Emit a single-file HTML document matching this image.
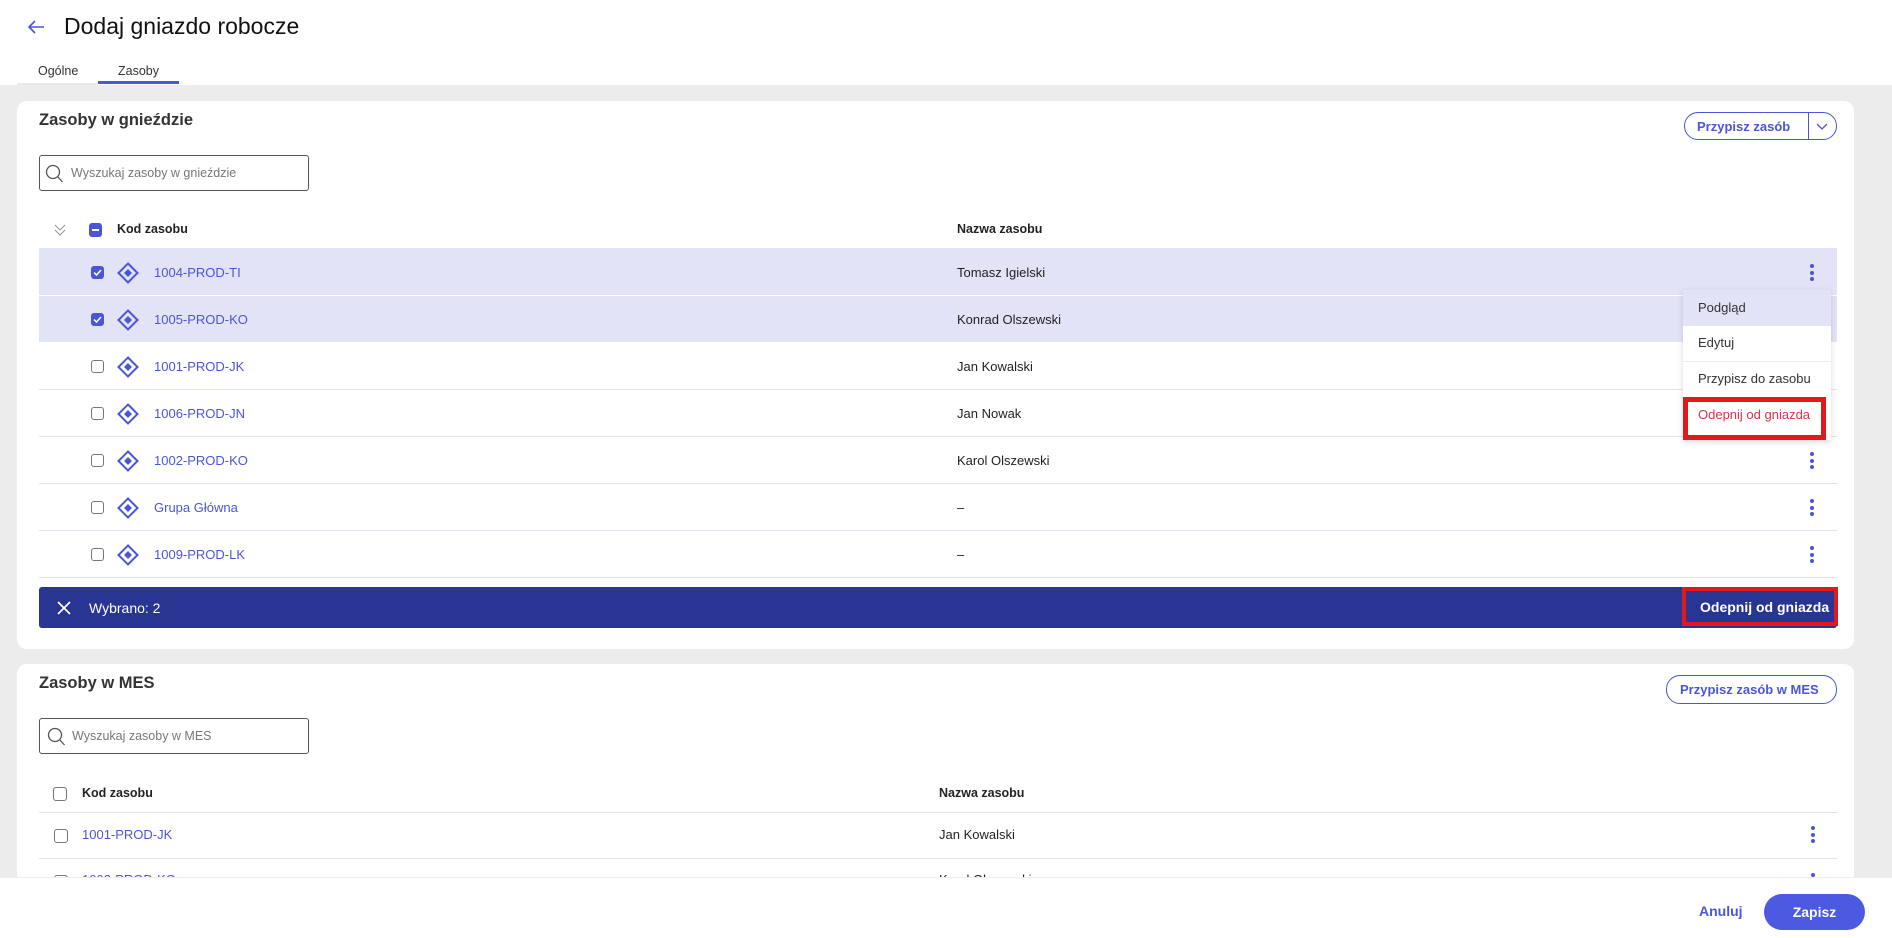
<!DOCTYPE html>
<html style="width:1892px;height:938px;overflow:hidden"><head><meta charset="utf-8">
<style>
*{box-sizing:border-box;margin:0;padding:0}
body{width:1892px;height:938px;overflow:hidden;background:#ececec;font-family:"Liberation Sans",sans-serif;position:relative;color:#222}
.a{position:absolute}
.top{left:0;top:0;width:1892px;height:85px;background:#fff}
.card{background:#fff;border-radius:10px}
.blue{color:#4b55d9}
.row{position:absolute;left:39px;width:1798px;height:47px;border-bottom:1px solid #e2e2f6;font-size:13px}
.row.sel{background:#e2e3f7;border-bottom:1px solid #fff}
.row span{position:absolute;top:16px}
.cb{position:absolute;width:13px;height:13px;border:1.3px solid #777;border-radius:3px;background:#fff}
.cb.on{background:#4b55d9;border-color:#4b55d9}
.dots{position:absolute;width:4px}
.dots i{display:block;width:4px;height:4px;border-radius:2px;background:#4b55d9;margin-bottom:2.5px}
.search{position:absolute;border:1.3px solid #555;border-radius:3px;height:36px;font-size:12.5px;color:#777}
.search span{position:absolute;left:24px;top:10px}
.pill{position:absolute;border:1.3px solid #4b55d9;border-radius:14px;color:#4b55d9;font-weight:bold;font-size:13px;text-align:center}
.hd{font-size:12.5px;font-weight:bold;color:#222}
</style></head><body>
<div class="a top"></div>
<svg class="a" style="left:26px;top:19px" width="20" height="16" viewBox="0 0 20 16"><path d="M18 8H3M9 2L3 8l6 6" fill="none" stroke="#4b55d9" stroke-width="1.6"/></svg>
<div class="a" style="left:64px;top:13px;font-size:23px;color:#111">Dodaj gniazdo robocze</div>
<div class="a" style="left:38px;top:64px;font-size:12.5px;color:#333">Ogólne</div>
<div class="a" style="left:118px;top:64px;font-size:12.5px;color:#333">Zasoby</div>
<div class="a" style="left:17px;top:83px;width:81px;height:2px;background:#e8e8e8"></div>
<div class="a" style="left:98px;top:81px;width:81px;height:3px;background:#4b55d9"></div>

<div class="a card" style="left:17px;top:101px;width:1837px;height:548px"></div>
<div class="a" style="left:39px;top:111px;font-size:16.5px;font-weight:bold;color:#333">Zasoby w gnieździe</div>
<div class="pill" style="left:1684px;top:112px;width:153px;height:28px"><span style="position:absolute;left:12px;top:6px">Przypisz zasób</span><span style="position:absolute;left:123px;top:0;width:1px;height:26px;background:#4b55d9"></span><svg style="position:absolute;left:131px;top:10px" width="12" height="8"><path d="M1 1l5 5 5-5" fill="none" stroke="#4b55d9" stroke-width="1.3"/></svg></div>
<div class="search" style="left:39px;top:155px;width:270px"><svg style="position:absolute;left:5px;top:8px" width="18" height="19"><circle cx="8" cy="8" r="6.5" fill="none" stroke="#555" stroke-width="1.3"/><path d="M12.5 12.5l5 5.5" stroke="#555" stroke-width="1.3"/></svg><span style="left:31px">Wyszukaj zasoby w gnieździe</span></div>

<svg class="a" style="left:54px;top:224px" width="12" height="12"><path d="M1 1l5 5 5-5M1 6l5 5 5-5" fill="none" stroke="#999" stroke-width="1.1"/></svg>
<div class="cb on" style="left:89px;top:223px;width:13px;height:14px"><div style="position:absolute;left:2px;top:5px;width:7px;height:2px;background:#fff"></div></div>
<div class="a hd" style="left:117px;top:222px">Kod zasobu</div>
<div class="a hd" style="left:957px;top:222px">Nazwa zasobu</div>
<div class="a" style="left:39px;top:248px;width:1798px;height:1px;background:#e2e2f6"></div>

<div class="row sel" style="top:249px"><div class="cb on" style="left:52px;top:17px"><svg width="11" height="11" style="position:absolute;left:0;top:0"><path d="M2 5.5l2.5 2.5 4.5-5" fill="none" stroke="#fff" stroke-width="1.5"/></svg></div><svg style="position:absolute;left:78px;top:13px" width="22" height="22"><path d="M11 1.5l9.5 9.5-9.5 9.5-9.5-9.5z" fill="none" stroke="#4b55d9" stroke-width="2"/><path d="M11 7l4 4-4 4-4-4z" fill="#4b55d9"/></svg><span class="blue" style="left:115px">1004-PROD-TI</span><span style="left:918px">Tomasz Igielski</span><div class="dots" style="left:1771px;top:15px"><i></i><i></i><i></i></div></div>
<div class="row sel" style="top:296px"><div class="cb on" style="left:52px;top:17px"><svg width="11" height="11" style="position:absolute;left:0;top:0"><path d="M2 5.5l2.5 2.5 4.5-5" fill="none" stroke="#fff" stroke-width="1.5"/></svg></div><svg style="position:absolute;left:78px;top:13px" width="22" height="22"><path d="M11 1.5l9.5 9.5-9.5 9.5-9.5-9.5z" fill="none" stroke="#4b55d9" stroke-width="2"/><path d="M11 7l4 4-4 4-4-4z" fill="#4b55d9"/></svg><span class="blue" style="left:115px">1005-PROD-KO</span><span style="left:918px">Konrad Olszewski</span></div>
<div class="row" style="top:343px"><div class="cb" style="left:52px;top:17px"></div><svg style="position:absolute;left:78px;top:13px" width="22" height="22"><path d="M11 1.5l9.5 9.5-9.5 9.5-9.5-9.5z" fill="none" stroke="#4b55d9" stroke-width="2"/><path d="M11 7l4 4-4 4-4-4z" fill="#4b55d9"/></svg><span class="blue" style="left:115px">1001-PROD-JK</span><span style="left:918px">Jan Kowalski</span></div>
<div class="row" style="top:390px"><div class="cb" style="left:52px;top:17px"></div><svg style="position:absolute;left:78px;top:13px" width="22" height="22"><path d="M11 1.5l9.5 9.5-9.5 9.5-9.5-9.5z" fill="none" stroke="#4b55d9" stroke-width="2"/><path d="M11 7l4 4-4 4-4-4z" fill="#4b55d9"/></svg><span class="blue" style="left:115px">1006-PROD-JN</span><span style="left:918px">Jan Nowak</span></div>
<div class="row" style="top:437px"><div class="cb" style="left:52px;top:17px"></div><svg style="position:absolute;left:78px;top:13px" width="22" height="22"><path d="M11 1.5l9.5 9.5-9.5 9.5-9.5-9.5z" fill="none" stroke="#4b55d9" stroke-width="2"/><path d="M11 7l4 4-4 4-4-4z" fill="#4b55d9"/></svg><span class="blue" style="left:115px">1002-PROD-KO</span><span style="left:918px">Karol Olszewski</span><div class="dots" style="left:1771px;top:15px"><i></i><i></i><i></i></div></div>
<div class="row" style="top:484px"><div class="cb" style="left:52px;top:17px"></div><svg style="position:absolute;left:78px;top:13px" width="22" height="22"><path d="M11 1.5l9.5 9.5-9.5 9.5-9.5-9.5z" fill="none" stroke="#4b55d9" stroke-width="2"/><path d="M11 7l4 4-4 4-4-4z" fill="#4b55d9"/></svg><span class="blue" style="left:115px">Grupa Główna</span><span style="left:918px">–</span><div class="dots" style="left:1771px;top:15px"><i></i><i></i><i></i></div></div>
<div class="row" style="top:531px"><div class="cb" style="left:52px;top:17px"></div><svg style="position:absolute;left:78px;top:13px" width="22" height="22"><path d="M11 1.5l9.5 9.5-9.5 9.5-9.5-9.5z" fill="none" stroke="#4b55d9" stroke-width="2"/><path d="M11 7l4 4-4 4-4-4z" fill="#4b55d9"/></svg><span class="blue" style="left:115px">1009-PROD-LK</span><span style="left:918px">–</span><div class="dots" style="left:1771px;top:15px"><i></i><i></i><i></i></div></div>

<div class="a" style="left:39px;top:587px;width:1798px;height:41px;background:#283593;border-radius:3px"></div>
<svg class="a" style="left:57px;top:601px" width="14" height="14"><path d="M1 1l12 12M13 1L1 13" stroke="#fff" stroke-width="1.7"/></svg>
<div class="a" style="left:89px;top:600px;font-size:14px;color:#fff">Wybrano: 2</div>
<div class="a" style="left:1682px;top:587px;width:156px;height:39px;border:4px solid #e0191e;background:#283593"></div>
<div class="a" style="left:1700px;top:599px;font-size:14px;font-weight:bold;color:#fff">Odepnij od gniazda</div>

<div class="a" style="left:1683px;top:290px;width:148px;height:150px;background:#fff;box-shadow:0 2px 6px rgba(0,0,0,.15)"></div>
<div class="a" style="left:1683px;top:290px;width:148px;height:36px;background:#e2e3f7"></div>
<div class="a" style="left:1683px;top:361px;width:148px;height:1px;background:#eee"></div>
<div class="a" style="left:1698px;top:300px;font-size:13px;color:#333">Podgląd</div>
<div class="a" style="left:1698px;top:335px;font-size:13px;color:#333">Edytuj</div>
<div class="a" style="left:1698px;top:371px;font-size:13px;color:#333">Przypisz do zasobu</div>
<div class="a" style="left:1683px;top:397px;width:143px;height:43px;border:5px solid #e0191e"></div>
<div class="a" style="left:1698px;top:407px;font-size:13px;color:#e03050">Odepnij od gniazda</div>

<div class="a card" style="left:17px;top:664px;width:1837px;height:274px;border-radius:10px 10px 0 0"></div>
<div class="a" style="left:39px;top:674px;font-size:16.5px;font-weight:bold;color:#333">Zasoby w MES</div>
<div class="pill" style="left:1666px;top:675px;width:171px;height:29px"><span style="position:absolute;left:13px;top:6px">Przypisz zasób w MES</span></div>
<div class="search" style="left:39px;top:718px;width:270px"><svg style="position:absolute;left:7px;top:8px" width="18" height="19"><circle cx="8" cy="8" r="6.5" fill="none" stroke="#555" stroke-width="1.3"/><path d="M12.5 12.5l5 5.5" stroke="#555" stroke-width="1.3"/></svg><span style="left:32px">Wyszukaj zasoby w MES</span></div>
<div class="cb" style="left:53px;top:787px;width:14px;height:14px"></div>
<div class="a hd" style="left:82px;top:786px">Kod zasobu</div>
<div class="a hd" style="left:939px;top:786px">Nazwa zasobu</div>
<div class="a" style="left:39px;top:812px;width:1798px;height:1px;background:#e2e2f6"></div>
<div class="cb" style="left:54px;top:829px;width:14px;height:14px"></div>
<div class="a blue" style="left:82px;top:827px;font-size:13px">1001-PROD-JK</div>
<div class="a" style="left:939px;top:827px;font-size:13px">Jan Kowalski</div>
<div class="dots a" style="left:1811px;top:826px"><i></i><i></i><i></i></div>
<div class="a" style="left:39px;top:858px;width:1798px;height:1px;background:#e2e2f6"></div>
<div class="cb" style="left:54px;top:875px;width:14px;height:14px"></div>
<div class="a blue" style="left:82px;top:872px;font-size:13px">1002-PROD-KO</div>
<div class="a" style="left:939px;top:872px;font-size:13px">Karol Olszewski</div>
<div class="dots a" style="left:1811px;top:873px"><i></i><i></i><i></i></div>

<div class="a" style="left:0;top:877px;width:1892px;height:61px;background:#fff;border-top:1px solid #eee"></div>
<div class="a" style="left:1699px;top:903px;font-size:14px;font-weight:bold;color:#4b55d9">Anuluj</div>
<div class="a" style="left:1764px;top:894px;width:101px;height:36px;border-radius:18px;background:#4b5ae0;color:#fff;font-weight:bold;font-size:14px;text-align:center;line-height:36px">Zapisz</div>
</body></html>
